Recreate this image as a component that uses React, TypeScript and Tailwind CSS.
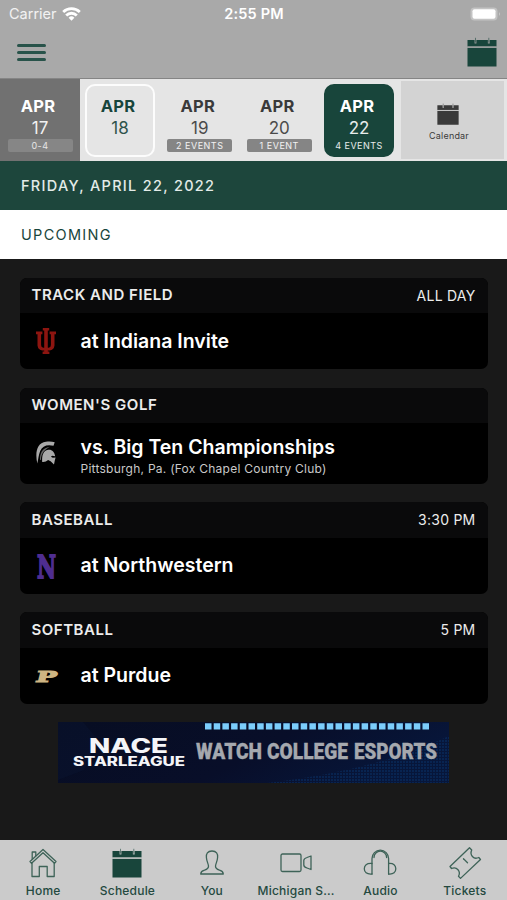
import { useState } from "react";
import type { ReactNode } from "react";

interface Day {
  month: string;
  day: number;
  note?: string;
  kind: "past" | "today" | "normal" | "selected";
}

interface EventItem {
  sport: string;
  time?: string;
  title: string;
  venue?: string;
  logo: ReactNode;
}

const days: Day[] = [
  { month: "APR", day: 17, note: "0-4", kind: "past" },
  { month: "APR", day: 18, kind: "today" },
  { month: "APR", day: 19, note: "2 EVENTS", kind: "normal" },
  { month: "APR", day: 20, note: "1 EVENT", kind: "normal" },
  { month: "APR", day: 22, note: "4 EVENTS", kind: "selected" },
];

function CalendarIcon({ className, ring }: { className: string; ring: string }) {
  return (
    <svg viewBox="0 0 30 30" className={className}>
      <path d="M0.5 3h29v6.5h-29z M0.5 10.7h29v18.9h-29z" fill="currentColor" />
      <path d="M0.5 10.1h29" stroke={ring} strokeWidth="1.2" opacity="0.8" />
      <path d="M8.5 1.5v5 M21.8 1.5v5" stroke={ring} strokeWidth="1.9" opacity="0.85" />
      <path d="M8.5 0.8v4.7 M21.8 0.8v4.7" stroke="currentColor" strokeWidth="0.8" opacity="0.7" />
    </svg>
  );
}

function IndianaLogo() {
  return (
    <svg viewBox="0 0 20 26" className="h-[26px] w-5 text-[#8d1510]" fill="currentColor">
      <path d="M6.8 0h6.4v2.6h-1.4v17.2h0.8q2.3-0.4 2.3-2.8V6.3h-1.3V3.6H20v2.7h-1.5v11.2q-0.6 4.6-5 5.1h-1.7v1h1.6V26H6.6v-2.4h1.6v-1H6.5q-4.4-0.5-5-5.1V6.3H0V3.6h6.4v2.7H5.1V17q0 2.4 2.3 2.8h0.8V2.6H6.8z" />
    </svg>
  );
}

function SpartanLogo() {
  return (
    <svg viewBox="0 0 20 24" className="h-6 w-5 text-[#a9a9a9]" fill="currentColor">
      <path d="M1.3 22.5C-1 12 0.5 2 10 0.8c3-0.5 6-0.3 8.7 0.4l-1.2 3.6C11 3.2 6.4 5 4.2 10c-1.6 3.8-1.8 8-2.9 12.5z" />
      <path d="M4 19c0-6 1.4-12 10-13.2C9 8.5 5.5 11.5 4.8 19z" opacity="0.6" />
      <path d="M6.2 21c-0.4-7 1-11.3 6-12.3 3.6-0.5 6.3 2 7 6.6l-3-0.6-1.3 1 1.9 1.1 2.8-0.4-0.7 2.5-0.9 4.7-3.4-3.4-2.5-1.2q-2.5 2.4-5.9 2z" />
    </svg>
  );
}

function NorthwesternLogo() {
  return (
    <svg viewBox="0 0 18 26" className="h-[26px] w-[18px] overflow-visible">
      <text
        transform="translate(0 24.8) scale(1 1.6)"
        textLength="19"
        lengthAdjust="spacingAndGlyphs"
        fontFamily="DejaVu Serif"
        fontWeight="700"
        fontSize="20"
        fill="#4f2d91"
        stroke="#4f2d91"
        strokeWidth="1.2"
      >
        N
      </text>
    </svg>
  );
}

function PurdueLogo() {
  return (
    <svg viewBox="0 0 24 14" className="h-[14px] w-6 overflow-visible">
      <text
        transform="translate(1 12.7) skewX(-14)"
        textLength="20.5"
        lengthAdjust="spacingAndGlyphs"
        fontFamily="DejaVu Serif"
        fontWeight="700"
        fontSize="15"
        fill="#cfb583"
        stroke="#cfb583"
        strokeWidth="1.2"
      >
        P
      </text>
    </svg>
  );
}

const events: EventItem[] = [
  { sport: "TRACK AND FIELD", time: "ALL DAY", title: "at Indiana Invite", logo: <IndianaLogo /> },
  {
    sport: "WOMEN'S GOLF",
    title: "vs. Big Ten Championships",
    venue: "Pittsburgh, Pa. (Fox Chapel Country Club)",
    logo: <SpartanLogo />,
  },
  { sport: "BASEBALL", time: "3:30 PM", title: "at Northwestern", logo: <NorthwesternLogo /> },
  { sport: "SOFTBALL", time: "5 PM", title: "at Purdue", logo: <PurdueLogo /> },
];

function StatusBar() {
  return (
    <div className="grid h-7 grid-cols-3 items-center pl-[9px] pr-[6px] text-white">
      <div className="flex items-center gap-[5px]">
        <span className="text-[14.5px] text-white/85">Carrier</span>
        <svg viewBox="0 0 19 14" className="h-[14px] w-[19px]" fill="none" stroke="white" strokeWidth="2.8">
          <path d="M1.2 5a12 12 0 0 1 16.6 0" />
          <path d="M4.2 8.4a7.6 7.6 0 0 1 10.6 0" />
          <path d="M6.6 10.7a4.1 4.1 0 0 1 5.8 0L9.5 13.7z" fill="white" stroke="none" />
        </svg>
      </div>
      <span className="mr-[2px] text-center text-[14.5px] font-semibold tracking-[0.2px]">2:55 PM</span>
      <svg viewBox="0 0 31 14" className="h-[14px] w-[31px] justify-self-end">
        <rect x="0.5" y="0.5" width="27" height="13" rx="4" fill="#c3c3c3" />
        <rect x="2.5" y="2.3" width="23" height="9.4" rx="2" fill="white" />
        <path d="M29 5q1.8 2 0 4z" fill="#d0d0d0" />
      </svg>
    </div>
  );
}

function DayCell({ item, onSelect }: { item: Day; onSelect: () => void }) {
  const shell = {
    past: "w-20 bg-[#717171] text-white",
    today: "w-20 text-[#18453b]",
    normal: "w-[79.5px] text-[#3a3a3a]",
    selected: "w-20 text-white",
  }[item.kind];
  const box = {
    past: "border-transparent",
    today: "border-white/90",
    normal: "border-transparent",
    selected: "border-[#18453b] bg-[#18453b]",
  }[item.kind];
  const badge = {
    past: "bg-[#868686] text-white/80",
    today: "",
    normal: "bg-[#858585] text-white/90",
    selected: "text-white/90",
  }[item.kind];

  return (
    <button type="button" onClick={onSelect} className={`flex h-full shrink-0 justify-center pt-[5px] ${shell}`}>
      <span className={`flex h-[73px] w-[70px] flex-col items-center rounded-[10px] border-2 ${box}`}>
        <span className="mt-[9px] mr-1 text-[16.5px] leading-[22px] font-bold tracking-[0.2px]">{item.month}</span>
        <span className="text-[17px] leading-[22px] opacity-90">{item.day}</span>
        {item.note && (
          <span className={`h-[13px] w-[65px] rounded-[2px] text-center text-[9px] leading-[13px] tracking-[0.5px] ${badge}`}>
            {item.note}
          </span>
        )}
      </span>
    </button>
  );
}

function EventCard({ event }: { event: EventItem }) {
  return (
    <article className="overflow-hidden rounded-[7px] bg-black text-white">
      <header className="flex h-[35.3px] items-center justify-between bg-[#0a0a0b] px-3 text-[#ececec]">
        <h2 className="text-[15px] font-semibold tracking-[0.53px]">{event.sport}</h2>
        <span className="text-[14px] tracking-[0.25px]">{event.time}</span>
      </header>
      <div className={`flex items-center ${event.venue ? "h-[60.3px]" : "h-14"}`}>
        <div className="ml-[14px] flex w-6 justify-center">{event.logo}</div>
        <div className={`ml-[23px] ${event.venue ? "pt-[6px]" : "pb-px"}`}>
          <h3 className="text-[19.5px] leading-6 font-semibold">{event.title}</h3>
          {event.venue && (
            <p className="text-[12px] leading-[19px] tracking-[0.25px] text-[#c9c9c9]">{event.venue}</p>
          )}
        </div>
      </div>
    </article>
  );
}

function SponsorBanner() {
  return (
    <svg viewBox="0 0 391 61" className="mx-auto mt-[18.5px] block h-[61px] w-[391px] overflow-visible">
      <defs>
        <linearGradient id="navy" x1="0" y1="0" x2="1" y2="0.3">
          <stop offset="0" stopColor="#070d22" />
          <stop offset="0.6" stopColor="#080e29" />
          <stop offset="1" stopColor="#07163a" />
        </linearGradient>
        <pattern id="mesh" width="3" height="3" patternUnits="userSpaceOnUse">
          <rect width="2" height="2" fill="#0a3268" />
        </pattern>
      </defs>
      <rect width="391" height="61" fill="url(#navy)" />
      <path d="M210 61Q320 48 391 14V61z" fill="url(#mesh)" opacity="0.5" />
      <path d="M0 0h25l15 18-14 30-26 10z" fill="#0a1b3b" opacity="0.25" />
      <path d="M147 4.3H371" stroke="#7bcdfb" strokeWidth="6.2" strokeDasharray="6.5 2.2" />
      <g fontFamily="Inter" fontWeight="800" fill="#f4f5f8">
        <text x="31" y="31" fontSize="19.5" textLength="79" lengthAdjust="spacingAndGlyphs">
          NACE
        </text>
        <text x="15" y="44" fontSize="12.5" textLength="112" lengthAdjust="spacingAndGlyphs">
          STARLEAGUE
        </text>
      </g>
      <g fontFamily="Roboto" fontWeight="900" fontSize="21.5" fill="#a5a8ae" stroke="#a5a8ae" strokeWidth="0.3">
        <text x="138" y="37" textLength="66" lengthAdjust="spacingAndGlyphs">
          WATCH
        </text>
        <text x="209" y="37" textLength="81" lengthAdjust="spacingAndGlyphs">
          COLLEGE
        </text>
        <text x="296" y="37" textLength="83" lengthAdjust="spacingAndGlyphs">
          ESPORTS
        </text>
      </g>
    </svg>
  );
}

function TabIcon({ children }: { children: ReactNode }) {
  return (
    <svg
      viewBox="0 0 34 34"
      className="h-[34px] w-[34px]"
      fill="none"
      stroke="#3e6358"
      strokeWidth="1.3"
      strokeLinejoin="round"
      strokeLinecap="round"
    >
      {children}
    </svg>
  );
}

const tabs = [
  {
    label: "Home",
    icon: (
      <TabIcon>
        <path d="M4 15.5 17 3.5l13 12-1.5 1.7L17 6.7 5.5 17.2z" />
        <path d="M6.2 13V6h3.6v3.8" />
        <path d="M6 16.8V30.5h7.3V20.5h7.9v10h7V16.8" />
      </TabIcon>
    ),
  },
  { label: "Schedule", icon: <CalendarIcon className="my-0.5 h-[30px] w-[30px] text-[#18453b]" ring="#cbcbcb" /> },
  {
    label: "You",
    icon: (
      <TabIcon>
        <path d="M17 5c-4.5 0-6 3-5.6 6.5.3 4 1.7 5.5 2.1 8.5.2 2.5-1.5 3.3-4 4.2-2.6.8-3.6 1.2-3.8 3.8h22.6c-.2-2.6-1.2-3-3.8-3.800-2.5-.9-4.2-1.7-4-4.200.4-3 1.8-4.500 2.1-8.500C23 8 21.500 5 17 5z" />
      </TabIcon>
    ),
  },
  {
    label: "Michigan S...",
    icon: (
      <TabIcon>
        <rect x="2" y="8" width="20" height="17.5" rx="1.5" />
        <path d="M32 10v13.5l-4-1.5q-3.2-1-3.2-3v-4.500q0-2 3.2-3z" />
      </TabIcon>
    ),
  },
  {
    label: "Audio",
    icon: (
      <TabIcon>
        <path d="M9 28V12.5a8.3 8.3 0 0 1 16.6 0V28" />
        <path d="M11 11.5a6.3 6.3 0 0 1 12.6 0" />
        <path d="M9 17.5C3.5 17 1.3 19.5 1.3 22.8s2.2 5.7 7.7 5.2M25.6 17.5c5-.5 7.2 2 7.2 5.3s-2.2 5.7-7.2 5.2" />
      </TabIcon>
    ),
  },
  {
    label: "Tickets",
    icon: (
      <TabIcon>
        <path d="M21.5 1.8 2 20.5l1.5 2c2.5-1 5-.5 6.5 1.2 1.6 1.8 1.7 4.3.5 6.5l2 2.2L32.5 13.5l-1.7-2c-2.5 1.2-4.8.8-6.4-1-1.500-1.7-1.700-4.300-.7-6.500z" />
        <path d="M15.5 12.8l4 4" />
      </TabIcon>
    ),
  },
];

export default function App() {
  const [activeTab, setActiveTab] = useState("Schedule");
  const [, setSelectedDay] = useState(22);

  return (
    <div className="flex h-[900px] w-[507px] flex-col overflow-hidden bg-[#191919] font-['Inter',sans-serif]">
      {/* Top bar */}
      <div className="h-[79px] shrink-0 border-b border-[#858585] bg-[#a9a9a9]">
        <StatusBar />
        <div className="flex items-start justify-between pr-[10px] pl-[17px] pt-[9px]">
          <button type="button" aria-label="Menu" className="flex flex-col gap-[4.5px] pt-[7px]">
            <span className="h-[2.5px] w-[29px] rounded bg-[#28534a]" />
            <span className="h-[2.5px] w-[29px] rounded bg-[#28534a]" />
            <span className="h-[2.5px] w-[29px] rounded bg-[#28534a]" />
          </button>
          <CalendarIcon className="h-[30px] w-[30px] text-[#18453b]" ring="#a9a9a9" />
        </div>
      </div>

      {/* Date strip */}
      <div className="flex h-[82px] shrink-0 bg-[#e5e5e5]">
        {days.map((d) => (
          <DayCell key={d.day} item={d} onSelect={() => setSelectedDay(d.day)} />
        ))}
        <button
          type="button"
          className="mt-[2px] ml-[2px] flex h-[78px] w-[103px] flex-col items-center bg-[#d3d3d3] pr-[10px] pt-[22px] text-[#3a3a3a]"
        >
          <CalendarIcon className="h-[22px] w-[22px]" ring="#d3d3d3" />
          <span className="ml-[3px] mt-[5px] text-[9px] leading-3 tracking-[0.2px]">Calendar</span>
        </button>
      </div>

      <div className="flex h-[49px] shrink-0 items-center bg-[#1d463c] pt-px pl-[21px] text-[14.5px] font-medium tracking-[1.3px] text-[#e3ebe8]">
        FRIDAY, APRIL 22, 2022
      </div>
      <div className="flex h-[49px] shrink-0 items-center bg-white pt-px pl-[21px] text-[14.5px] tracking-[1.3px] text-[#18453b]">
        UPCOMING
      </div>

      {/* Events */}
      <main className="flex-1 px-[19.5px] pt-[19px]">
        <div className="flex flex-col gap-[18.7px]">
          {events.map((e) => (
            <EventCard key={e.sport} event={e} />
          ))}
        </div>
        <SponsorBanner />
      </main>

      {/* Tab bar */}
      <nav className="grid h-[60px] shrink-0 grid-cols-6 bg-[#cbcbcb] pl-px">
        {tabs.map((t) => (
          <button
            key={t.label}
            type="button"
            onClick={() => setActiveTab(t.label)}
            aria-current={t.label === activeTab}
            className="flex flex-col items-center pt-[6px] text-[#24493f]"
          >
            {t.icon}
            <span className="mt-[3px] text-[12px] leading-4 font-medium tracking-[0.2px] whitespace-nowrap">{t.label}</span>
          </button>
        ))}
      </nav>
    </div>
  );
}
